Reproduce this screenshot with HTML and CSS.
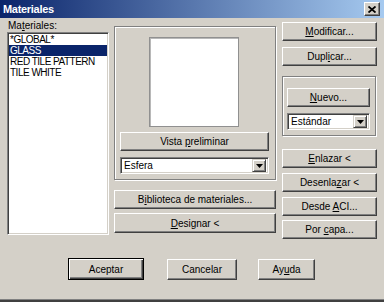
FILE: index.html
```html
<!DOCTYPE html>
<html>
<head>
<meta charset="utf-8">
<link rel="stylesheet" href="styles.css">
</head>
<body>
<div class="window">
  <div class="titlebar">
    <span class="title">Materiales</span>
    <span class="close"><svg width="8" height="7" viewBox="0 0 8 7"><path d="M0.5 0.5 L7.5 6.5 M7.5 0.5 L0.5 6.5" stroke="#000" stroke-width="1.8" fill="none"/></svg></span>
  </div>
  <div class="main">
    <div class="col-left">
      <div class="label">Ma<u>t</u>eriales:</div>
      <div class="listbox">
        <div class="item">*GLOBAL*</div>
        <div class="item sel">GLASS</div>
        <div class="item">RED TILE PATTERN</div>
        <div class="item">TILE WHITE</div>
      </div>
    </div>
    <div class="col-mid">
      <div class="group preview">
        <div class="swatch"></div>
        <div class="btn vista"><span>Vista <u>p</u>reliminar</span></div>
        <div class="combo esfera"><span class="combo-text">Esfera</span><span class="drop"><svg width="7" height="4" viewBox="0 0 7 4"><polygon points="0,0 7,0 3.5,4" fill="#000"/></svg></span></div>
      </div>
      <div class="btn biblio"><span>B<u>i</u>blioteca de materiales...</span></div>
      <div class="btn designar"><span><u>D</u>esignar &lt;</span></div>
    </div>
    <div class="col-right">
      <div class="btn"><span><u>M</u>odificar...</span></div>
      <div class="btn mt6"><span>Dupl<u>i</u>car...</span></div>
      <div class="group nuevo-group">
        <div class="btn nuevo"><span><u>N</u>uevo...</span></div>
        <div class="combo estandar"><span class="combo-text">Estándar</span><span class="drop"><svg width="7" height="4" viewBox="0 0 7 4"><polygon points="0,0 7,0 3.5,4" fill="#000"/></svg></span></div>
      </div>
      <div class="btn mt13"><span><u>E</u>nlazar &lt;</span></div>
      <div class="btn mt5"><span>Desenla<u>z</u>ar &lt;</span></div>
      <div class="btn mt5"><span>Desde <u>A</u>CI...</span></div>
      <div class="btn mt4"><span>Por <u>c</u>apa...</span></div>
    </div>
  </div>
  <div class="bottom">
    <div class="btn default aceptar"><span>Aceptar</span></div>
    <div class="btn cancelar"><span>Cancelar</span></div>
    <div class="btn ayuda"><span>Ay<u>u</u>da</span></div>
  </div>
  <div class="frame-bottom"></div>
</div>
</body>
</html>
```

FILE: styles.css
```css
* { box-sizing: border-box; }
html, body { margin: 0; padding: 0; }
body {
  width: 384px;
  height: 302px;
  overflow: hidden;
  background: #d4d0c8;
  font-family: "Liberation Sans", Arial, sans-serif;
  font-size: 10px;
  color: #000;
}
u { text-decoration: underline; text-underline-offset: 1px; }
.window {
  width: 384px;
  height: 302px;
  display: flex;
  flex-direction: column;
  background: #d4d0c8;
}
.titlebar {
  height: 18px;
  display: flex;
  align-items: center;
  padding-left: 3px;
  background: linear-gradient(to right, #0a246a, #a6caf0);
}
.title {
  color: #fff;
  font-weight: bold;
  font-size: 11px;
  letter-spacing: -0.3px;
}
.close {
  margin-left: auto;
  margin-right: 4px;
  width: 16px;
  height: 14px;
  display: flex;
  align-items: center;
  justify-content: center;
  background: #d4d0c8;
  border: 1px solid;
  border-color: #fff #404040 #404040 #fff;
  box-shadow: inset -1px -1px #808080;
}
.main {
  display: flex;
  align-items: flex-start;
  padding: 2px 0 0 7px;
}
.col-left { width: 102px; display: flex; flex-direction: column; }
.label { height: 12px; line-height: 12px; padding-left: 1px; }
.listbox {
  height: 203px;
  background: #fff;
  border: 1px solid;
  border-color: #808080 #fff #fff #808080;
  box-shadow: inset 1px 1px #404040, inset -1px -1px #d4d0c8;
  padding: 1px 1px;
}
.item {
  height: 11px;
  line-height: 11px;
  padding-left: 1px;
  letter-spacing: -0.5px;
  white-space: nowrap;
}
.item.sel { background: #0a246a; color: #fff; }
.col-mid {
  margin-left: 5px;
  width: 162px;
  margin-top: 6px;
  display: flex;
  flex-direction: column;
}
.group {
  border: 1px solid #808080;
  box-shadow: inset 1px 1px #fff, 1px 1px #fff;
  display: flex;
  flex-direction: column;
}
.preview {
  height: 154px;
  padding: 10px 5px 0 5px;
}
.swatch {
  width: 90px;
  height: 90px;
  margin-left: 29px;
  background: #fff;
  border: 1px solid #909090;
  box-shadow: inset 1px 1px #b8b8b8;
}
.btn {
  height: 19px;
  display: flex;
  align-items: center;
  justify-content: center;
  white-space: nowrap;
  background: #d4d0c8;
  border: 1px solid;
  border-color: #fff #404040 #404040 #fff;
  box-shadow: inset -1px -1px #808080;
}
.vista { width: 149px; margin-top: 5px; }
.combo {
  height: 17px;
  display: flex;
  align-items: center;
  background: #fff;
  border: 1px solid;
  border-color: #808080 #fff #fff #808080;
  box-shadow: inset 1px 1px #404040, inset -1px -1px #d4d0c8;
  padding: 2px;
}
.combo-text { flex: 1; padding-left: 1px; line-height: 11px; }
.drop {
  width: 14px;
  height: 13px;
  display: flex;
  align-items: center;
  justify-content: center;
  background: #d4d0c8;
  border: 1px solid;
  border-color: #d4d0c8 #404040 #404040 #d4d0c8;
  box-shadow: inset 1px 1px #fff, inset -1px -1px #808080;
}
.esfera { width: 149px; margin-top: 6px; }
.biblio { margin-top: 10px; }
.designar { margin-top: 4px; height: 20px; }
.col-right {
  margin-left: 6px;
  width: 95px;
  margin-top: 2px;
  display: flex;
  flex-direction: column;
}
.mt4 { margin-top: 4px; }
.mt5 { margin-top: 5px; }
.mt6 { margin-top: 6px; }
.mt13 { margin-top: 13px; }
.nuevo-group {
  margin-top: 10px;
  height: 60px;
  width: 94px;
  padding: 11px 0 0 4px;
}
.nuevo { width: 83px; }
.estandar { width: 83px; margin-top: 6px; }
.bottom {
  display: flex;
  align-items: flex-start;
  margin-top: 19px;
  padding-left: 68px;
}
.default {
  border: 1px solid #000;
  box-shadow: inset 1px 1px #fff, inset -1px -1px #404040, inset -2px -2px #808080;
}
.aceptar { width: 76px; height: 22px; }
.cancelar { width: 70px; height: 21px; margin-left: 23px; margin-top: 1px; }
.ayuda { width: 57px; height: 21px; margin-left: 21px; margin-top: 1px; }
.frame-bottom {
  margin-top: auto;
  height: 3px;
  border-top: 1px solid #808080;
  background: #404040;
}
```
